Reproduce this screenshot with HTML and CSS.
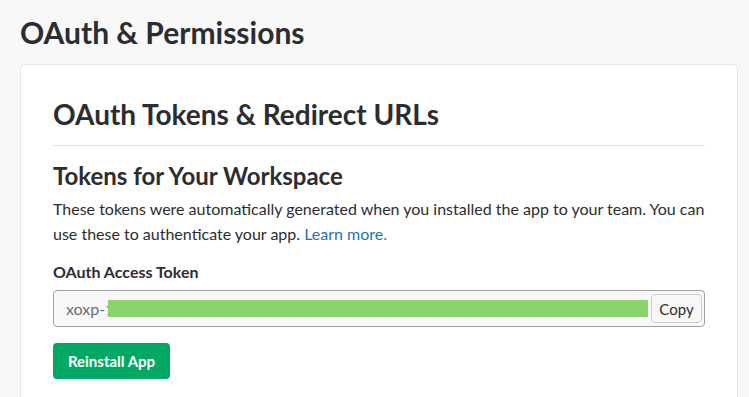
FILE: index.html
```html
<!DOCTYPE html>
<html>
<head>
<meta charset="utf-8">
<link rel="stylesheet" href="styles.css">
</head>
<body>
<div class="page">
  <h1 class="page-title">OAuth &amp; Permissions</h1>
  <div class="card">
    <h2 class="card-title">OAuth Tokens &amp; Redirect URLs</h2>
    <div class="divider"></div>
    <h3 class="section-title">Tokens for Your Workspace</h3>
    <p class="desc">These tokens were automatically generated when you installed the app to your team. You can use these to authenticate your app. <a class="link" href="#">Learn more.</a></p>
    <div class="label">OAuth Access Token</div>
    <div class="token-field">
      <span class="token-text">xoxp-1</span>
      <span class="redact"></span>
      <button class="copy-btn">Copy</button>
    </div>
    <button class="reinstall-btn">Reinstall App</button>
  </div>
</div>
</body>
</html>
```
FILE: styles.css
```css
html, body {
  margin: 0;
  padding: 0;
  background: #f8f8f8;
  font-family: Lato, "Open Sans", sans-serif;
  color: #2c2d30;
  overflow: hidden;
}
.page {
  padding: 12px 11px 0 20px;
}
.page-title {
  margin: 0 0 12px 0;
  font-size: 30px;
  font-weight: 700;
  line-height: 40px;
}
.card {
  background: #fff;
  border: 1px solid #e6e6e6;
  border-radius: 5px;
  padding: 29px 32px 40px 32px;
}
.card-title {
  margin: 0;
  font-size: 28px;
  font-weight: 700;
  line-height: 40px;
}
.divider {
  height: 1px;
  background: #e2e2e2;
  margin: 11px 0 14px 0;
}
.section-title {
  margin: 0;
  font-size: 24px;
  font-weight: 700;
  line-height: 32px;
}
.desc {
  margin: 4px 0 0 0;
  font-size: 16px;
  line-height: 25px;
}
.link {
  color: #1d74b5;
  text-decoration: none;
}
.label {
  margin-top: 15px;
  font-size: 16px;
  font-weight: 700;
  line-height: 22px;
}
.token-field {
  margin-top: 7px;
  display: flex;
  align-items: center;
  height: 35px;
  border: 1px solid #a0a0a0;
  border-radius: 4px;
  background: #f8f8f8;
  padding: 0 2px 0 12px;
}
.token-text {
  font-size: 16px;
  color: #6e6e6e;
}
.redact {
  flex: 1;
  height: 17px;
  background: #8bd46b;
  margin-left: -6px;
  margin-right: 3px;
}
.copy-btn {
  font-family: inherit;
  font-size: 15px;
  color: #2c2d30;
  background: #f8f8f8;
  border: 1px solid #cfcfcf;
  border-radius: 4px;
  height: 29px;
  width: 51px;
  padding: 0;
}
.reinstall-btn {
  margin-top: 16px;
  display: block;
  font-family: inherit;
  font-size: 15px;
  font-weight: 700;
  color: #fff;
  background: #00a863;
  border: none;
  border-radius: 4px;
  height: 36px;
  width: 117px;
  padding: 0;
}
```
